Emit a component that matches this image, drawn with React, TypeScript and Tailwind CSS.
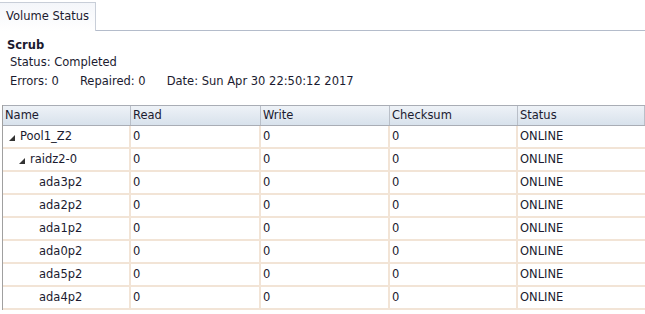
import React from "react";

const rows = [
  { name: "Pool1_Z2", level: 0, toggle: true },
  { name: "raidz2-0", level: 1, toggle: true },
  { name: "ada3p2", level: 2, toggle: false },
  { name: "ada2p2", level: 2, toggle: false },
  { name: "ada1p2", level: 2, toggle: false },
  { name: "ada0p2", level: 2, toggle: false },
  { name: "ada5p2", level: 2, toggle: false },
  { name: "ada4p2", level: 2, toggle: false },
];

const cols = ["Name", "Read", "Write", "Checksum", "Status"];
const widths = ["w-[128px]", "w-[130px]", "w-[129px]", "w-[128px]", "flex-1"];

function Triangle() {
  return (
    <svg width="6" height="6" viewBox="0 0 6 6" className="mr-[5px] mt-[2px]">
      <polygon points="6,0 6,6 0,6" fill="#333" />
    </svg>
  );
}

export default function App() {
  return (
    <div
      className="h-[314px] w-[645px] overflow-hidden bg-white text-[11.5px] text-[#1b1b30]"
      style={{ fontFamily: '"DejaVu Sans", Verdana, sans-serif' }}
    >
      {/* Tabs */}
      <div className="flex h-[31px] items-end pt-[2px]">
        <div className="flex h-[29px] w-[96px] items-center border-r border-t border-[#c8ced8] bg-gradient-to-b from-[#f4f6fa] to-white pl-[6px]">
          Volume Status
        </div>
        <div className="flex-1 border-b border-[#b4bccb]" />
      </div>

      {/* Scrub info */}
      <div className="pl-[7px] pt-[6px]">
        <div className="h-[17px] font-bold">Scrub</div>
        <div className="h-[19px] pl-[3px]">Status: Completed</div>
        <div className="flex gap-[21px] pl-[3px]">
          <span>Errors: 0</span>
          <span>Repaired: 0</span>
          <span>Date: Sun Apr 30 22:50:12 2017</span>
        </div>
      </div>

      {/* Table */}
      <div className="ml-[2px] mt-[15px] border-l border-[#a0a0a0]">
        <div className="flex h-[21px] border-y border-[#a9adb5] bg-gradient-to-b from-[#eef2f7] to-[#d8e2ec]">
          {cols.map((c, i) => (
            <div
              key={c}
              className={`${widths[i]} flex items-center border-r border-[#b9bfc8] pl-[2px]`}
            >
              {c}
            </div>
          ))}
        </div>
        {rows.map((r) => (
          <div key={r.name} className="flex h-[23px] border-b-2 border-[#f2e4d6]">
            <div
              className={`${widths[0]} flex items-center border-r-2 border-[#f2e4d6] ${
                r.level === 0 ? "pl-[6px]" : r.level === 1 ? "pl-[16px]" : "pl-[36px]"
              }`}
            >
              {r.toggle && <Triangle />}
              {r.name}
            </div>
            <div className={`${widths[1]} flex items-center border-r-2 border-[#f2e4d6] pl-[2px]`}>0</div>
            <div className={`${widths[2]} flex items-center border-r-2 border-[#f2e4d6] pl-[2px]`}>0</div>
            <div className={`${widths[3]} flex items-center border-r-2 border-[#f2e4d6] pl-[2px]`}>0</div>
            <div className={`${widths[4]} flex items-center pl-[2px]`}>ONLINE</div>
          </div>
        ))}
      </div>
    </div>
  );
}
